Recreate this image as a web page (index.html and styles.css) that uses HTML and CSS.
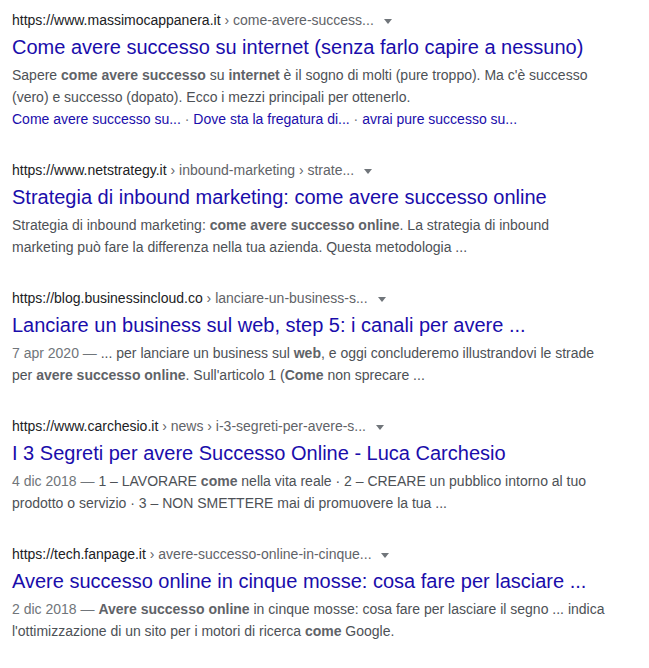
FILE: index.html
```html
<!DOCTYPE html>
<html lang="it">
<head>
  <meta charset="UTF-8" />
  <meta name="viewport" content="width=device-width, initial-scale=1.0" />
  <title>come avere successo online - Cerca</title>
  <link rel="stylesheet" href="styles.css">
</head>
<body>
  <div class="results">
    <div class="result">
      <div class="url"><span class="domain">https://www.massimocappanera.it</span> › come-avere-success... <span class="arrow"></span></div>
      <h3 class="title">Come avere successo su internet (senza farlo capire a nessuno)</h3>
      <div class="snippet">Sapere <b>come avere successo</b> su <b>internet</b> è il sogno di molti (pure troppo). Ma c'è successo<br>(vero) e successo (dopato). Ecco i mezzi principali per ottenerlo.</div>
      <div class="sitelinks">
        <a href="#">Come avere successo su...</a><span class="dot"> · </span><a href="#">Dove sta la fregatura di...</a><span class="dot"> · </span><a href="#">avrai pure successo su...</a>
      </div>
    </div>

    <div class="result">
      <div class="url"><span class="domain">https://www.netstrategy.it</span> › inbound-marketing › strate... <span class="arrow"></span></div>
      <h3 class="title">Strategia di inbound marketing: come avere successo online</h3>
      <div class="snippet">Strategia di inbound marketing: <b>come avere successo online</b>. La strategia di inbound<br>marketing può fare la differenza nella tua azienda. Questa metodologia ...</div>
    </div>

    <div class="result">
      <div class="url"><span class="domain">https://blog.businessincloud.co</span> › lanciare-un-business-s... <span class="arrow"></span></div>
      <h3 class="title">Lanciare un business sul web, step 5: i canali per avere ...</h3>
      <div class="snippet"><span class="date">7 apr 2020 — </span>... per lanciare un business sul <b>web</b>, e oggi concluderemo illustrandovi le strade<br>per <b>avere successo online</b>. Sull'articolo 1 (<b>Come</b> non sprecare ...</div>
    </div>

    <div class="result">
      <div class="url"><span class="domain">https://www.carchesio.it</span> › news › i-3-segreti-per-avere-s... <span class="arrow"></span></div>
      <h3 class="title">I 3 Segreti per avere Successo Online - Luca Carchesio</h3>
      <div class="snippet"><span class="date">4 dic 2018 — </span>1 – LAVORARE <b>come</b> nella vita reale · 2 – CREARE un pubblico intorno al tuo<br>prodotto o servizio · 3 – NON SMETTERE mai di promuovere la tua ...</div>
    </div>

    <div class="result">
      <div class="url"><span class="domain">https://tech.fanpage.it</span> › avere-successo-online-in-cinque... <span class="arrow"></span></div>
      <h3 class="title">Avere successo online in cinque mosse: cosa fare per lasciare ...</h3>
      <div class="snippet"><span class="date">2 dic 2018 — </span><b>Avere successo online</b> in cinque mosse: cosa fare per lasciare il segno ... indica<br>l'ottimizzazione di un sito per i motori di ricerca <b>come</b> Google.</div>
    </div>
  </div>
</body>
</html>
```

FILE: styles.css
```css
* {
  margin: 0;
  padding: 0;
  box-sizing: border-box;
}
body {
  font-family: "Liberation Sans", Arial, sans-serif;
  background: #fff;
  color: #4d5156;
}
.results {
  width: 620px;
  padding: 9px 0 0 12px;
}
.result {
  margin-bottom: 29px;
}
.url {
  font-size: 14px;
  line-height: 22px;
  color: #5f6368;
  white-space: nowrap;
}
.domain {
  color: #202124;
}
.arrow {
  display: inline-block;
  margin-left: 6px;
  vertical-align: middle;
  border-style: solid;
  border-width: 5px 4px 0 4px;
  border-color: #70757a transparent transparent transparent;
}
.title {
  margin: 3px 0 4px;
  font-size: 20px;
  line-height: 26px;
  font-weight: normal;
  color: #1a0dab;
  white-space: nowrap;
}
.snippet {
  font-size: 14px;
  line-height: 22px;
  color: #4d5156;
  white-space: nowrap;
}
.snippet b {
  color: #5f6368;
}
.date {
  color: #70757a;
}
.sitelinks {
  font-size: 14px;
  line-height: 22px;
  white-space: nowrap;
}
.sitelinks a {
  color: #1a0dab;
  text-decoration: none;
}
.dot {
  color: #70757a;
}
```
